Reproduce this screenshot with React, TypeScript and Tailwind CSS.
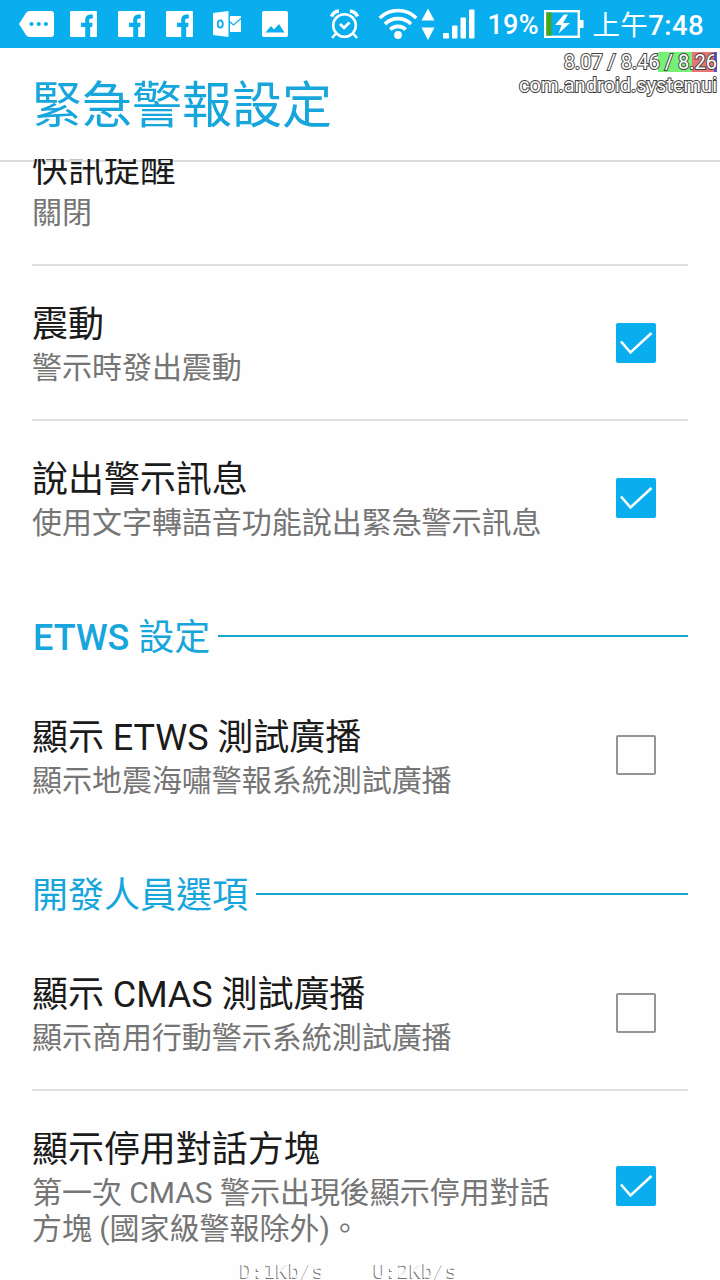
import type { ReactNode } from 'react'

function FacebookIcon() {
    return (
        <svg width="27" height="26" viewBox="0 0 27 26" className="shrink-0">
            <rect width="27" height="26" rx="1" fill="#fff" />
            <path d="M15.200 26V16H11v-4.300h4.200V9.500c0-4 2-6 5.600-6h2v4h-1.600c-1.600 0-2 .8-2 2.200v2h3.400l-.5 4.300H20.200V26Z" fill="#09aeef" />
        </svg>
    )
}

function NotificationIcons() {
    return (
        <div className="flex items-center">
            <svg width="35" height="26" viewBox="0 0 35 26" className="shrink-0">
                <path d="M0 13 7 2Q8.300 0 10.500 0H32q3 0 3 3v20q0 3-3 3H10.500Q8.300 26 7 24Z" fill="#fff" />
                <g fill="#09aeef">
                    <circle cx="12.500" cy="13" r="2.100" />
                    <circle cx="19.700" cy="13" r="2.100" />
                    <circle cx="26.900" cy="13" r="2.100" />
                </g>
            </svg>
            <div className="ml-[16px] flex gap-[21px]">
                <FacebookIcon />
                <FacebookIcon />
                <FacebookIcon />
            </div>
            <svg width="29" height="26" viewBox="0 0 29 26" className="ml-[20px] shrink-0">
                <path d="M0 2 15.500 0v26L0 24Z" fill="#fff" />
                <ellipse cx="7.300" cy="13" rx="2.500" ry="3.700" fill="none" stroke="#09aeef" strokeWidth="1.800" />
                <path d="M17 5h11v16H17Z" fill="#fff" />
                <path d="m16.500 10.500 4 3.500L28.500 7" fill="none" stroke="#09aeef" strokeWidth="1.200" />
            </svg>
            <svg width="26" height="26" viewBox="0 0 26 26" className="ml-[20px] shrink-0">
                <rect width="26" height="26" rx="2" fill="#fff" />
                <path d="m3.500 21.500 5.500-6.500 3 3.500L17 13l5.500 8.500Z" fill="#09aeef" />
            </svg>
        </div>
    )
}

function SystemIcons() {
    return (
        <div className="flex items-center">
            <svg width="30" height="30" viewBox="0 0 30 30" className="shrink-0" fill="none" stroke="#fff" strokeWidth="2.600">
                <circle cx="14.500" cy="16.500" r="11.300" />
                <path d="m10 15 4 3.800 5.500-5.300" strokeWidth="2.800" />
                <path d="M1.500 7.500Q3.500 2.500 9 2M27.500 7.500Q25.500 2.500 20 2" strokeWidth="3.400" />
                <path d="m5.500 25-3.500 4m21.500-4 3.500 4" />
            </svg>
            <svg width="40" height="34" viewBox="0 0 40 34" className="ml-[18px] shrink-0" fill="none" stroke="#fff" strokeWidth="3.600">
                <path d="M1.700 11a26 26 0 0 1 36.600 0" />
                <path d="M7 17a18.500 18.500 0 0 1 26 0" />
                <path d="M12.300 22.500a11 11 0 0 1 15.400 0" />
                <circle cx="20" cy="28" r="3.900" fill="#fff" stroke="none" />
            </svg>
            <svg width="14" height="32" viewBox="0 0 14 32" className="ml-[3px] shrink-0" fill="#fff">
                <path d="m7 0.500 6.500 12H.5Zm0 31.500 6.500-12.500H.5Z" />
            </svg>
            <svg width="33" height="30" viewBox="0 0 33 30" className="ml-[8px] shrink-0" fill="#fff">
                <rect x="0" y="24" width="6" height="5.500" rx="1" />
                <rect x="9" y="16.500" width="5.500" height="13" rx="1" />
                <rect x="17.500" y="8.500" width="5.500" height="21" rx="1" />
                <rect x="26" y="0.500" width="5.500" height="29" rx="1" />
            </svg>
            <span className="mt-[3px] ml-[11px] w-[53px] text-[27px] leading-none font-medium tracking-[0.3px] whitespace-nowrap">19%</span>
            <svg width="40" height="28" viewBox="0 0 40 28" className="ml-[4px] shrink-0">
                <rect x="1.200" y="1.200" width="33.600" height="25.600" fill="none" stroke="#fff" strokeWidth="2.400" />
                <rect x="36" y="10" width="3.500" height="8" fill="#fff" />
                <rect x="2.400" y="2.400" width="5" height="23.200" fill="#4aa80e" />
                <path d="m20 4.500-9 10.500h6.500l-3 8.500L26 13h-7l5-8.500Z" fill="#fff" />
            </svg>
            <span className="mt-[3px] ml-[8px] text-[27.500px] leading-none font-medium tracking-[0.4px] whitespace-nowrap">
                <span className="font-normal">上午</span>7:48
            </span>
        </div>
    )
}

function CheckBox({ checked }: { checked: boolean }) {
    if (!checked) return <div className="mr-8 size-10 shrink-0 rounded-xs border-2 border-[#959595]" />

    return (
        <div className="mr-8 size-10 shrink-0 rounded-xs bg-[#09aeef]">
            <svg width="40" height="40" viewBox="0 0 40 40" fill="none" stroke="#fff" strokeWidth="2.600">
                <path d="m5 18.500 9.500 11L35.500 10" />
            </svg>
        </div>
    )
}

interface SettingRowProps {
    title: string
    summary: ReactNode
    checked?: boolean
    divider?: boolean
}

function SettingRow({ title, summary, checked, divider = false }: SettingRowProps) {
    return (
        <div className={divider ? 'border-b-2 border-[#e0e0e0]' : 'pb-[2px]'}>
            <div className="flex items-center justify-between py-[33px]">
                <div className="whitespace-nowrap">
                    <h3 className="h-[51px] text-[36px] leading-[53px] tracking-[-0.05px] text-[#1b1b1b]">{title}</h3>
                    <p className="text-[30px] leading-[36px] tracking-[-0.03px] text-[#757575]">{summary}</p>
                </div>
                {checked !== undefined && <CheckBox checked={checked} />}
            </div>
        </div>
    )
}

function Category({ latin, label }: { latin?: string; label: string }) {
    return (
        <div className="flex h-[102.5px] items-center gap-2 pt-[18px]">
            <h2 className="pt-[4px] text-[36px] leading-[48px] whitespace-nowrap text-[#16a6dc]">
                {latin && <span className="pl-px font-medium">{latin} </span>}
                {label}
            </h2>
            <div className="h-[2px] flex-1 bg-[#16a6cf]" />
        </div>
    )
}

export default function App() {
    return (
        <div className="relative flex h-[1280px] w-[720px] flex-col overflow-hidden bg-[#fefefe] font-[Roboto,'Noto_Sans_CJK_TC',sans-serif]">
            <div className="flex h-12 shrink-0 items-center justify-between bg-[#09aeef] pr-[16px] pl-[19px] text-white">
                <NotificationIcons />
                <SystemIcons />
            </div>

            <header className="flex h-[114px] shrink-0 items-center border-b-2 border-[#dcdcdc] pt-[4px] pl-8">
                <h1 className="text-[50px] leading-[60px] text-[#16a6dc]">緊急警報設定</h1>
            </header>

            <main className="relative -mt-[3px] flex-1 overflow-hidden px-8">
                <div className="-mt-[48px]">
                    <SettingRow title="快訊提醒" summary="關閉" divider />
                    <SettingRow title="震動" summary="警示時發出震動" checked divider />
                    <SettingRow title="說出警示訊息" summary="使用文字轉語音功能說出緊急警示訊息" checked />
                    <Category latin="ETWS" label="設定" />
                    <SettingRow title="顯示 ETWS 測試廣播" summary="顯示地震海嘯警報系統測試廣播" checked={false} />
                    <Category label="開發人員選項" />
                    <SettingRow title="顯示 CMAS 測試廣播" summary="顯示商用行動警示系統測試廣播" checked={false} divider />
                    <SettingRow
                        title="顯示停用對話方塊"
                        summary={
                            <>
                                第一次 CMAS 警示出現後顯示停用對話
                                <br />
                                方塊 (國家級警報除外)。
                            </>
                        }
                        checked
                    />
                </div>
            </main>

            {/* cpu load overlay */}
            <div className="absolute top-[52px] right-[3px] text-right text-[20px] leading-[23px] text-white">
                <div className="absolute top-0 right-0 flex h-5">
                    <div className="w-[34px] bg-[#78f078]" />
                    <div className="w-[22px] bg-[#e87474]" />
                    <div className="w-[3px] bg-[#5555d0]" />
                </div>
                <div className="relative [-webkit-text-stroke:2px_#444] [paint-order:stroke_fill]">
                    <p className="-mt-px">8.07 / 8.46 / 8.26</p>
                    <p>com.android.systemui</p>
                </div>
            </div>

            {/* network speed overlay */}
            <div className="absolute top-[1262px] left-[240px] flex gap-[49px] font-['DejaVu_Sans_Mono',monospace] text-[20px] leading-[18px] text-white [text-shadow:-1px_0.5px_0.5px_#777]">
                <span>D:1Kb/s</span>
                <span>U:2Kb/s</span>
            </div>
        </div>
    )
}
